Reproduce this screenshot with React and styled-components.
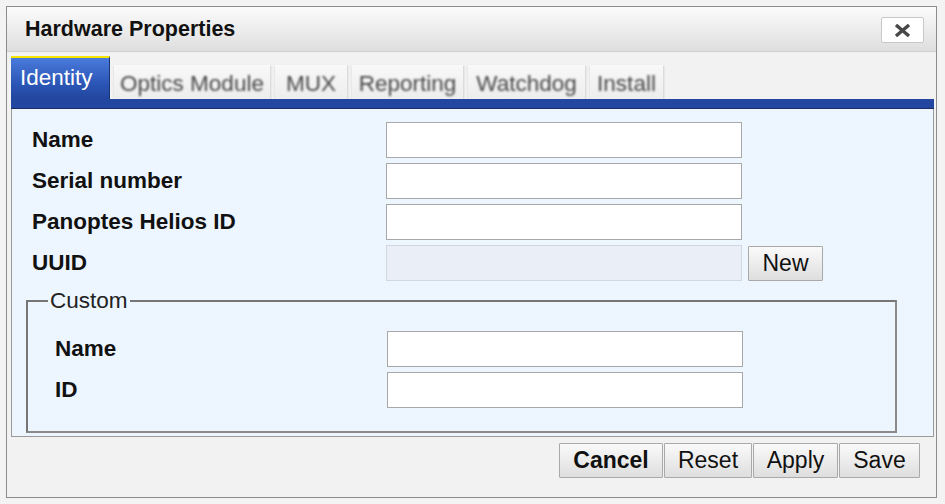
import React from 'react';
import styled, { createGlobalStyle } from 'styled-components';

const GlobalStyle = createGlobalStyle`
  body {
    margin: 0;
    background: #f3f3f3;
    font-family: 'Liberation Sans', Arial, sans-serif;
  }
`;

const Page = styled.div`
  height: 504px;
  padding: 6px 0 0 6px;
  box-sizing: border-box;
`;

const Dialog = styled.div`
  width: 931px;
  height: 492px;
  box-sizing: border-box;
  border: 1px solid #8c8c8c;
  background: #f2f2f2;
  display: flex;
  flex-direction: column;
`;

const TitleBar = styled.div`
  height: 44px;
  border-bottom: 1px solid #cfcfcf;
  background: linear-gradient(#fbfbfb, #dedede);
  display: flex;
  align-items: center;
  justify-content: space-between;
  padding: 0 12px 0 18px;
`;

const Title = styled.h1`
  margin: 0;
  font-size: 21.5px;
  font-weight: 700;
  color: #111;
`;

const CloseButton = styled.button`
  width: 43px;
  height: 26px;
  margin-top: 2px;
  padding: 0;
  border: 1px solid #c8c8c8;
  border-radius: 2px;
  background: #fff;
  display: flex;
  align-items: center;
  justify-content: center;
`;

const TabArea = styled.div`
  padding: 4px 2px 0 4px;
`;

const TabRow = styled.div`
  display: flex;
  align-items: flex-end;
  gap: 4px;
  height: 43px;
`;

const Tab = styled.div`
  box-sizing: border-box;
  width: ${(p) => p.width}px;
  height: ${(p) => (p.active ? '43px' : '34px')};
  padding: ${(p) => (p.active ? '7px 0 0 9px' : '5px 0 0 0')};
  text-align: ${(p) => (p.active ? 'left' : 'center')};
  font-size: 22.5px;
  color: ${(p) => (p.active ? '#fff' : '#484848')};
  background: ${(p) =>
    p.active
      ? 'linear-gradient(#4a7bdc, #2c57b8 60%, #22469e)'
      : 'linear-gradient(#f8f8f8, #ededed)'};
  border-top: ${(p) => (p.active ? '2px solid #f4e600' : '1px solid #fafafa')};
  border-right: ${(p) => (p.active ? '1px solid #1c3574' : '1px solid #dcdcdc')};
  box-shadow: ${(p) => (p.active ? 'none' : '0 1px 2px rgba(0,0,0,0.12)')};
  white-space: nowrap;
`;

const TabLabel = styled.span`
  filter: ${(p) => (p.blurred ? 'blur(0.9px)' : 'none')};
  display: inline-block;
`;

const Panel = styled.div`
  display: flex;
  flex-direction: column;
`;

const Bar = styled.div`
  height: 9px;
  background: #2346a0;
  border-bottom: 1px solid #1b2d62;
`;

const Content = styled.div`
  height: 328px;
  box-sizing: border-box;
  background: #edf5fe;
  border: 1px solid #9a9a9a;
  border-top: none;
  padding: 13px 14px 0 20px;
`;

const FormGrid = styled.div`
  display: grid;
  grid-template-columns: ${(p) => p.labelWidth}px 356px auto;
  row-gap: 5px;
  column-gap: 6px;
  align-items: center;
  justify-items: start;
`;

const Label = styled.label`
  font-size: 22.5px;
  font-weight: 700;
  color: #111;
`;

const Input = styled.input`
  box-sizing: border-box;
  width: 356px;
  height: 36px;
  border: 1px solid ${(p) => (p.disabled ? '#d2d8e0' : '#a8a8a8')};
  background: ${(p) => (p.disabled ? '#e9eef7' : '#fff')};
  margin: 0;
  font-size: 18px;
  font-family: inherit;
`;

const Button = styled.button`
  box-sizing: border-box;
  width: ${(p) => p.width}px;
  height: 35px;
  padding: 0;
  border: 1px solid #a9a9a9;
  background: linear-gradient(#fafafa, #dedede);
  font-family: 'Liberation Sans', Arial, sans-serif;
  font-size: 23px;
  font-weight: ${(p) => (p.bold ? 700 : 400)};
  color: #111;
  border-radius: 1px;
`;

const Fieldset = styled.fieldset`
  margin: 9px 0 0 -6px;
  width: 871px;
  height: 143px;
  box-sizing: border-box;
  border: 2px solid;
  border-color: #767676 #8a8a8a #8a8a8a #767676;
  padding: 18px 0 0 27px;
`;

const Legend = styled.legend`
  font-size: 22.5px;
  color: #222;
  padding: 0 2px;
  margin-left: -7px;
  line-height: 1;
`;

const Footer = styled.div`
  display: flex;
  justify-content: flex-end;
  gap: 1px;
  padding: 6px 16px 0 0;
`;

const XIcon = () => (
  <svg width="19" height="13" viewBox="0 0 19 13">
    <path d="M3 1 L16 12 M16 1 L3 12" stroke="#484848" strokeWidth="3.4" />
  </svg>
);

const tabs = [
  { name: 'Identity', width: 99 },
  { name: 'Optics Module', width: 157 },
  { name: 'MUX', width: 73 },
  { name: 'Reporting', width: 112 },
  { name: 'Watchdog', width: 118 },
  { name: 'Install', width: 74 },
];

export default function App() {
  return (
    <Page>
      <GlobalStyle />
      <Dialog>
        <TitleBar>
          <Title>Hardware Properties</Title>
          <CloseButton>
            <XIcon />
          </CloseButton>
        </TitleBar>
        <TabArea>
          <TabRow>
            {tabs.map((t, i) => (
              <Tab key={t.name} active={i === 0} width={t.width}>
                <TabLabel blurred={i !== 0}>{t.name}</TabLabel>
              </Tab>
            ))}
          </TabRow>
          <Panel>
            <Bar />
            <Content>
              <FormGrid labelWidth={348}>
                <Label>Name</Label>
                <Input />
                <span />
                <Label>Serial number</Label>
                <Input />
                <span />
                <Label>Panoptes Helios ID</Label>
                <Input />
                <span />
                <Label>UUID</Label>
                <Input disabled />
                <Button width={75}>New</Button>
              </FormGrid>
              <Fieldset>
                <Legend>Custom</Legend>
                <FormGrid labelWidth={326}>
                  <Label>Name</Label>
                  <Input />
                  <span />
                  <Label>ID</Label>
                  <Input />
                  <span />
                </FormGrid>
              </Fieldset>
            </Content>
          </Panel>
        </TabArea>
        <Footer>
          <Button bold width={104}>Cancel</Button>
          <Button width={88}>Reset</Button>
          <Button width={85}>Apply</Button>
          <Button width={81}>Save</Button>
        </Footer>
      </Dialog>
    </Page>
  );
}
